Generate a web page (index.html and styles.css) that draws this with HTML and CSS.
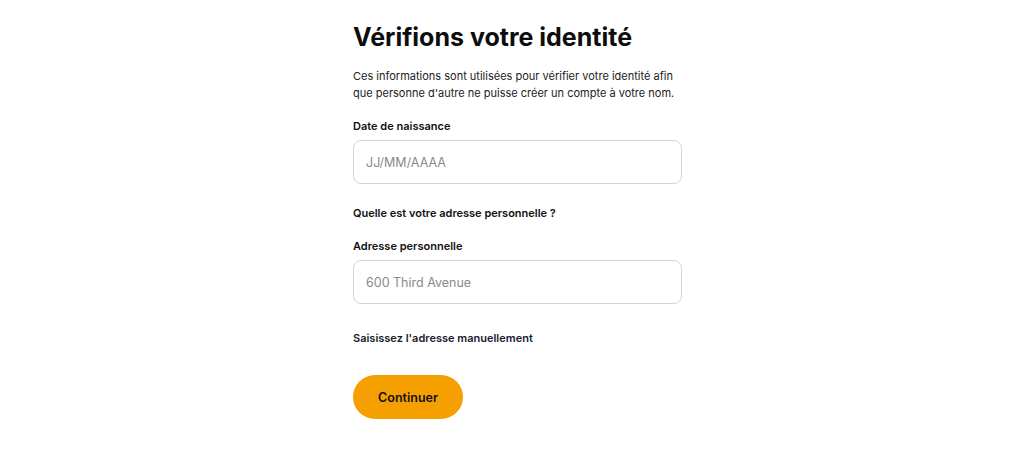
FILE: index.html
```html
<!DOCTYPE html>
<html lang="fr">
<head>
<meta charset="utf-8">
<title>Vérifions votre identité</title>
<link rel="stylesheet" href="styles.css">
</head>
<body>
<main class="page">
  <form class="form">
    <h1 class="title">Vérifions votre identité</h1>
    <p class="intro">Ces informations sont utilisées pour vérifier votre identité afin que personne d'autre ne puisse créer un compte à votre nom.</p>

    <label class="label" for="dob">Date de naissance</label>
    <input class="field" id="dob" type="text" placeholder="JJ/MM/AAAA">

    <p class="question">Quelle est votre adresse personnelle ?</p>

    <label class="label" for="addr">Adresse personnelle</label>
    <input class="field" id="addr" type="text" placeholder="600 Third Avenue">

    <p class="manual">Saisissez l'adresse manuellement</p>

    <button class="btn" type="button">Continuer</button>
  </form>
</main>
</body>
</html>
```
FILE: styles.css
```css
* { box-sizing: border-box; }
html, body { margin: 0; padding: 0; background: #fff; }
body {
  font-family: Inter, "Noto Sans", sans-serif;
  color: #111;
}
.page {
  width: 340px;
  margin: 0 auto;
  padding-left: 11px;
}
.form {
  display: flex;
  flex-direction: column;
  align-items: flex-start;
  width: 329px;
  padding-top: 22px;
}
.title {
  margin: 0;
  font-size: 25px;
  line-height: 30px;
  font-weight: 700;
  color: #0d0d0d;
}
.intro {
  margin: 16px 0 0;
  font-size: 11px;
  line-height: 17px;
  color: #222;
}
.label {
  margin-top: 16px;
  font-size: 11px;
  line-height: 16px;
  font-weight: 600;
  color: #111;
}
.field {
  width: 100%;
  height: 44px;
  margin-top: 6px;
  padding: 0 12px;
  border: 1px solid #d4d4d4;
  border-radius: 8px;
  font-family: inherit;
  font-size: 12.5px;
  color: #111;
  background: #fff;
  outline: none;
}
.field::placeholder { color: #8a8a8a; }
.question {
  margin: 21px 0 0;
  font-size: 11px;
  line-height: 16px;
  font-weight: 600;
  color: #111;
}
.question + .label { margin-top: 17px; }
.manual {
  margin: 26px 0 0;
  font-size: 11px;
  line-height: 16px;
  font-weight: 600;
  color: #1a1a2e;
}
.btn {
  margin-top: 29px;
  width: 110px;
  height: 44px;
  border: none;
  border-radius: 22px;
  background: #f5a000;
  font-family: inherit;
  font-size: 12.5px;
  font-weight: 600;
  color: #111;
  cursor: pointer;
}
```
